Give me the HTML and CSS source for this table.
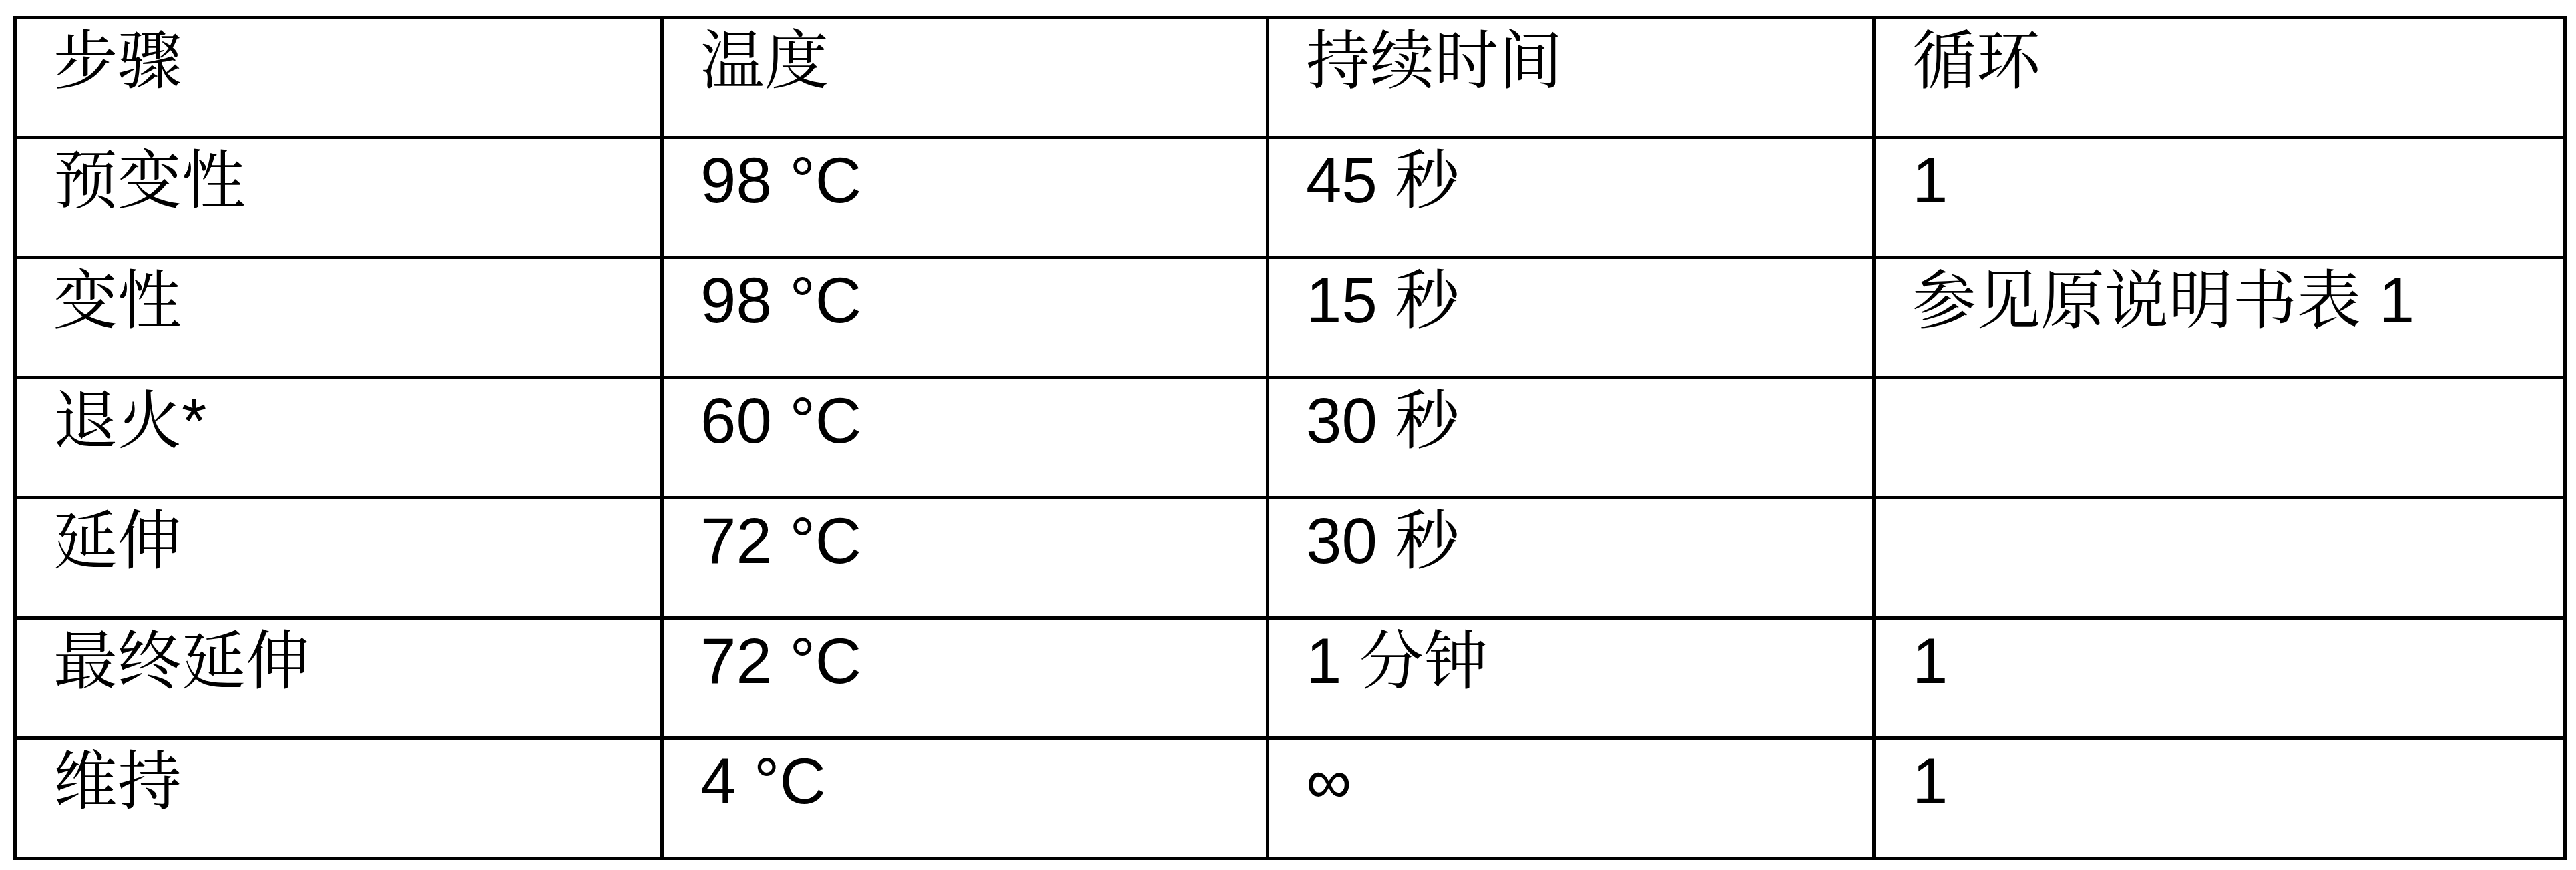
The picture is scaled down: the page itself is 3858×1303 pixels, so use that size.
FILE: index.html
```html
<!DOCTYPE html>
<html lang="zh-CN">
<head>
<meta charset="utf-8">
<title>PCR 程序</title>
<link rel="stylesheet" href="styles.css">
</head>
<body>
<div class="table" role="table">
  <div class="cell" role="columnheader">步骤</div>
  <div class="cell" role="columnheader">温度</div>
  <div class="cell" role="columnheader">持续时间</div>
  <div class="cell" role="columnheader">循环</div>

  <div class="cell">预变性</div>
  <div class="cell">98 °C</div>
  <div class="cell">45 秒</div>
  <div class="cell">1</div>

  <div class="cell">变性</div>
  <div class="cell">98 °C</div>
  <div class="cell">15 秒</div>
  <div class="cell">参见原说明书表 1</div>

  <div class="cell">退火*</div>
  <div class="cell">60 °C</div>
  <div class="cell">30 秒</div>
  <div class="cell"></div>

  <div class="cell">延伸</div>
  <div class="cell">72 °C</div>
  <div class="cell">30 秒</div>
  <div class="cell"></div>

  <div class="cell">最终延伸</div>
  <div class="cell">72 °C</div>
  <div class="cell">1 分钟</div>
  <div class="cell">1</div>

  <div class="cell">维持</div>
  <div class="cell">4 °C</div>
  <div class="cell">∞</div>
  <div class="cell">1</div>
</div>
</body>
</html>
```

FILE: styles.css
```css
html, body {
  margin: 0;
  background: #ffffff;
}

body {
  padding: 24px 0 0 20px;
}

.table {
  display: grid;
  grid-template-columns: 969px 907px 908px 1035px;
  grid-template-rows: 179px repeat(6, 180px);
  width: max-content;
  border-top: 5px solid #000;
  border-left: 5px solid #000;
  font-family: "Liberation Sans", "Noto Serif CJK SC", "Noto Sans CJK SC", sans-serif;
  font-size: 96px;
  line-height: 110px;
  color: #000;
}

.cell {
  box-sizing: border-box;
  border-right: 5px solid #000;
  border-bottom: 5px solid #000;
  padding: 7px 0 0 55px;
  white-space: nowrap;
}
```
